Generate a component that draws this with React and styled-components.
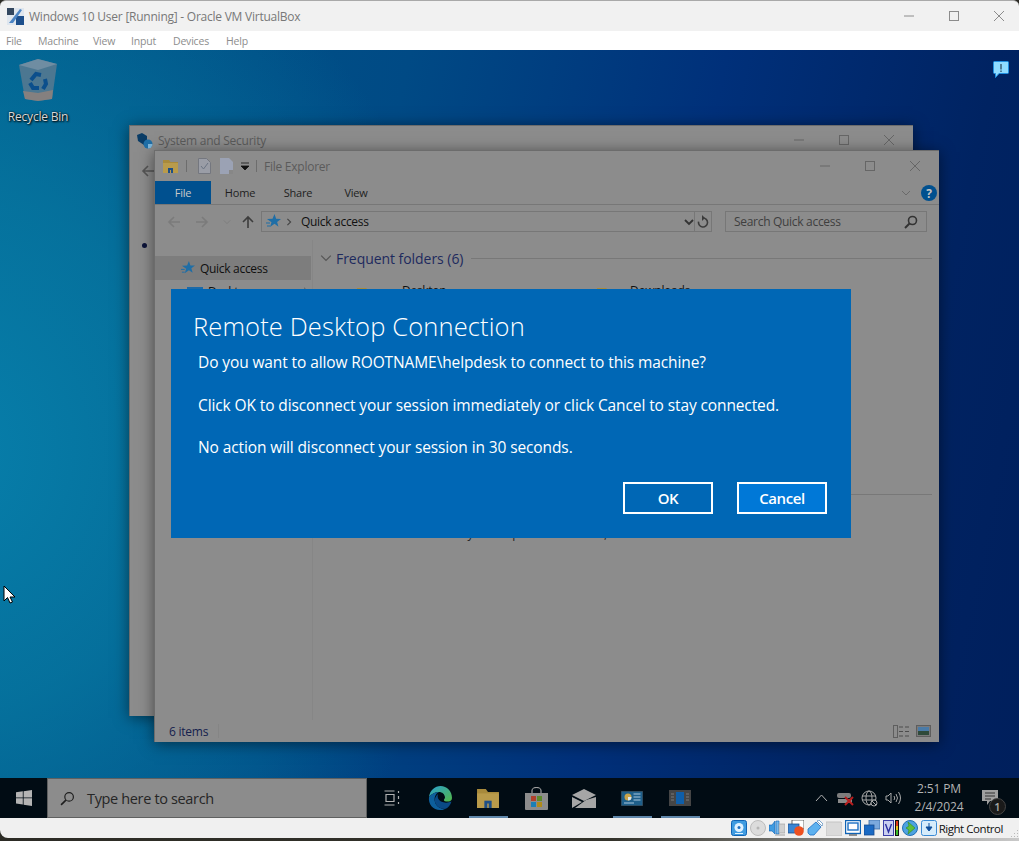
import React from "react";
import styled, { createGlobalStyle } from "styled-components";

const FONT = `"Open Sans", "Noto Sans", "Liberation Sans", sans-serif`;

const GlobalStyle = createGlobalStyle`
  html, body {
    margin: 0;
    padding: 0;
    overflow: hidden;
    background: #2c2b25;
  }
  * { box-sizing: border-box; }
`;

const Host = styled.div`
  width: 1019px;
  height: 841px;
  overflow: hidden;
  display: flex;
  flex-direction: column;
  font-family: ${FONT};
  background: #2c2b25;
`;

const TitleBar = styled.div`
  height: 31px;
  display: flex;
  align-items: center;
  background: #f1f1f1;
  border-top: 1px solid #a9a9a9;
  border-radius: 6px 6px 0 0;
  padding-left: 7px;
  flex: none;
`;

const TitleText = styled.div`
  margin-left: 5px;
  font-size: 12px;
  letter-spacing: -0.24px;
  color: #787878;
  flex: 1;
`;

const TitleControls = styled.div`
  display: flex;
  margin-right: -2px;
`;

const TitleControl = styled.div`
  width: 45px;
  height: 30px;
  display: flex;
  align-items: center;
  justify-content: center;
`;

const MenuBar = styled.div`
  height: 19px;
  background: #fff;
  display: flex;
  align-items: center;
  padding-left: 6px;
  flex: none;
`;

const MenuItem = styled.div`
  width: ${(p) => p.$w}px;
  font-size: 10.5px;
  letter-spacing: -0.2px;
  color: #8d8d8d;
`;

const Desktop = styled.div`
  position: relative;
  height: 728px;
  flex: none;
  overflow: hidden;
  background:
    radial-gradient(ellipse 540px 580px at -60px 400px, #077fab 0%, rgba(7, 122, 163, 0.75) 45%, rgba(0, 100, 150, 0) 100%),
    linear-gradient(102deg, #005a8a 0%, #004a85 35%, #00307a 62%, #002362 85%, #001f5c 100%);
`;

const DesktopIcon = styled.div`
  position: absolute;
  left: 0;
  top: 8px;
  width: 76px;
  display: flex;
  flex-direction: column;
  align-items: center;
`;

const DesktopLabel = styled.div`
  margin-top: 6px;
  font-size: 12px;
  letter-spacing: -0.22px;
  color: #d8d8d8;
  text-shadow: 0 0 2px #000, 1px 1px 2px #000;
`;

const Bubble = styled.div`
  position: absolute;
  left: 993px;
  top: 11px;
  line-height: 0;
`;

const Cursor = styled.div`
  position: absolute;
  left: 3px;
  top: 535px;
  line-height: 0;
`;

const Win = styled.div`
  position: absolute;
  left: ${(p) => p.$left}px;
  top: ${(p) => p.$top}px;
  width: ${(p) => p.$w}px;
  height: ${(p) => p.$h}px;
  background: #8c8c8c;
  border-top: 1px solid #6c6c6c;
  border-left: 1px solid #6c6c6c;
  box-shadow: 0 2px 14px rgba(0, 0, 0, 0.5);
  display: flex;
  flex-direction: column;
`;

const WinTitle = styled.div`
  height: ${(p) => p.$h}px;
  display: flex;
  align-items: center;
  flex: none;
  padding-left: ${(p) => p.$pad}px;
`;

const WinTitleText = styled.div`
  flex: 1;
  margin-left: ${(p) => p.$ml}px;
  font-size: 12px;
  letter-spacing: -0.25px;
  color: #5b5b5b;
`;

const Caption = styled.div`
  width: 45px;
  height: 28px;
  display: flex;
  align-items: center;
  justify-content: center;
`;

const Captions = styled.div`
  display: flex;
  padding-right: 2px;
`;

const Spaced = styled.div`
  margin-left: ${(p) => p.$ml || 0}px;
  line-height: 0;
  flex: none;
`;

const QuickSep = styled.div`
  width: 1px;
  height: 12px;
  margin-left: ${(p) => p.$ml}px;
  background: #6d6d6d;
`;

const BackBody = styled.div`
  flex: 1;
  display: flex;
  flex-direction: column;
  padding: 10px 0 0 11px;
  gap: 65px;
`;

const Bullet = styled.div`
  width: 5px;
  height: 5px;
  border-radius: 50%;
  background: #0c1338;
  margin-left: 1px;
`;

const Ribbon = styled.div`
  height: 24px;
  display: flex;
  align-items: stretch;
  border-bottom: 1px solid #777;
  flex: none;
`;

const RibbonTab = styled.div`
  width: ${(p) => p.$w}px;
  display: flex;
  align-items: center;
  justify-content: center;
  font-size: 11px;
  letter-spacing: -0.2px;
  background: ${(p) => (p.$active ? "#00508f" : "transparent")};
  color: ${(p) => (p.$active ? "#c9c9c9" : "#1e1e1e")};
`;

const RibbonEnd = styled.div`
  margin-left: auto;
  display: flex;
  align-items: center;
  gap: 10px;
  padding-right: 2px;
`;

const AddressRow = styled.div`
  height: 35px;
  flex: none;
  display: flex;
  align-items: flex-start;
  padding: 6px 12px 0 0;
`;

const NavArrows = styled.div`
  width: 106px;
  height: 21px;
  display: flex;
  align-items: center;
  padding-left: 12px;
  gap: 14px;
`;

const AddressBox = styled.div`
  width: 451px;
  height: 21px;
  display: flex;
  align-items: center;
  border: 1px solid #777;
  padding-left: 4px;
`;

const AddressText = styled.div`
  margin-left: 8px;
  font-size: 12px;
  letter-spacing: -0.3px;
  color: #111;
  flex: 1;
`;

const AddressDivider = styled.div`
  width: 17px;
  height: 100%;
  border-left: 1px solid #777;
  display: flex;
  align-items: center;
  justify-content: center;
`;

const SearchBox = styled.div`
  width: 202px;
  height: 21px;
  margin-left: 13px;
  display: flex;
  align-items: center;
  justify-content: space-between;
  padding: 0 8px;
  border: 1px solid #777;
  font-size: 12px;
  letter-spacing: -0.3px;
  color: #3f3f3f;
`;

const Content = styled.div`
  flex: 1;
  min-height: 0;
  display: flex;
`;

const NavPane = styled.div`
  width: 158px;
  flex: none;
  border-right: 1px solid #868686;
  padding-top: 16px;
`;

const NavRow = styled.div`
  height: ${(p) => p.$h}px;
  width: 156px;
  display: flex;
  align-items: center;
  padding-left: ${(p) => p.$pad}px;
  gap: 5px;
  font-size: 12px;
  letter-spacing: -0.3px;
  color: #101010;
  background: ${(p) => (p.$active ? "#7d7d7d" : "transparent")};
`;

const NavExpand = styled.div`
  margin-left: auto;
  margin-right: 2px;
  line-height: 0;
`;

const Main = styled.div`
  flex: 1;
  padding: 8px 7px 0 7px;
  display: flex;
  flex-direction: column;
`;

const SectionHead = styled.div`
  height: 20px;
  display: flex;
  align-items: center;
  gap: 4px;
  font-size: 14px;
  letter-spacing: -0.05px;
  color: #1e2a5e;
  white-space: nowrap;
`;

const SectionLine = styled.div`
  flex: 1;
  height: 1px;
  margin-left: 4px;
  background: #787878;
`;

const FolderGrid = styled.div`
  height: 215px;
  display: grid;
  grid-template-columns: 240px 240px;
  grid-auto-rows: 66px;
  padding: 20px 0 0 36px;
`;

const FolderTile = styled.div`
  display: flex;
  gap: ${(p) => p.$gap}px;
  font-size: 12px;
  letter-spacing: -0.3px;
  color: #111;
`;

const FolderName = styled.div`
  margin-top: -6px;
`;

const SectionRule = styled.div`
  height: 1px;
  margin-top: 11px;
  background: #787878;
`;

const EmptyNote = styled.div`
  margin-top: 30px;
  text-align: center;
  font-size: 12px;
  letter-spacing: -0.2px;
  color: #222;
`;

const StatusRow = styled.div`
  height: 22px;
  flex: none;
  display: flex;
  align-items: center;
  padding: 0 8px 0 14px;
  font-size: 12px;
  letter-spacing: -0.25px;
  color: #14204d;
`;

const StatusSep = styled.div`
  width: 1px;
  height: 14px;
  margin-left: 10px;
  background: #858585;
`;

const StatusIcons = styled.div`
  margin-left: auto;
  display: flex;
  align-items: center;
  gap: 6px;
`;

const Dialog = styled.div`
  position: absolute;
  left: 171px;
  top: 239px;
  width: 680px;
  height: 249px;
  background: #0067b5;
  color: #fff;
  padding: 21px 24px 24px 22px;
  display: flex;
  flex-direction: column;
`;

const DialogTitle = styled.div`
  font-size: 25.5px;
  font-weight: 300;
  line-height: 33px;
  letter-spacing: 0.13px;
`;

const DialogBody = styled.div`
  margin-top: 8px;
  padding-left: 5px;
  display: flex;
  flex-direction: column;
  gap: 20.5px;
  font-size: 15.5px;
  line-height: 22px;
  letter-spacing: -0.11px;
`;

const DialogButtons = styled.div`
  margin-top: auto;
  display: flex;
  justify-content: flex-end;
  gap: 24px;
`;

const DialogButton = styled.div`
  width: 90px;
  height: 32px;
  border: 2px solid #fff;
  display: flex;
  align-items: center;
  justify-content: center;
  font-size: 15px;
  font-weight: 600;
  letter-spacing: -0.4px;
  background: ${(p) => (p.$focus ? "#0078d7" : "transparent")};
`;

const Taskbar = styled.div`
  height: 40px;
  flex: none;
  display: flex;
  align-items: stretch;
  background: #010c14;
`;

const StartButton = styled.div`
  width: 47px;
  display: flex;
  align-items: center;
  justify-content: center;
`;

const TaskSearch = styled.div`
  width: 320px;
  display: flex;
  align-items: center;
  gap: 12px;
  padding-left: 12px;
  background: #8c8c8c;
  border: 1px solid #5f6060;
  font-size: 14.5px;
  letter-spacing: -0.35px;
  color: #262626;
`;

const TaskApps = styled.div`
  display: flex;
  margin-left: 1px;
`;

const TaskApp = styled.div`
  position: relative;
  width: 48px;
  display: flex;
  align-items: center;
  justify-content: center;
  &::after {
    content: "";
    display: ${(p) => (p.$open ? "block" : "none")};
    position: absolute;
    left: 5px;
    right: 4px;
    bottom: 0;
    height: 2px;
    background: #5f87ab;
  }
`;

const Tray = styled.div`
  margin-left: auto;
  display: flex;
  align-items: center;
`;

const TrayIcon = styled.div`
  width: 24px;
  display: flex;
  align-items: center;
  justify-content: center;
`;

const Clock = styled.div`
  width: 68px;
  text-align: center;
  font-size: 12px;
  line-height: 18px;
  letter-spacing: -0.15px;
  white-space: nowrap;
  color: #b4b4b4;
`;

const NotifyWrap = styled.div`
  position: relative;
  width: 46px;
  height: 100%;
  display: flex;
  align-items: center;
  padding-left: 9px;
`;

const NotifyBadge = styled.div`
  position: absolute;
  left: 16px;
  top: 20px;
  width: 17px;
  height: 17px;
  border-radius: 50%;
  border: 1px solid #444;
  background: #1a1a1a;
  color: #a8a8a8;
  font-size: 11px;
  font-weight: 600;
  line-height: 15px;
  text-align: center;
`;

const VBoxStatus = styled.div`
  height: 20px;
  flex: none;
  display: flex;
  align-items: center;
  justify-content: flex-end;
  gap: 3px;
  background: #f0f0f0;
  border-radius: 0 0 0 8px;
`;

const HostKey = styled.div`
  margin-left: -1px;
  font-size: 11.5px;
  letter-spacing: -0.45px;
  color: #111;
`;

const GripBox = styled.div`
  width: 13px;
  height: 100%;
  display: flex;
  align-items: flex-end;
  justify-content: flex-end;
`;

const BottomStrip = styled.div`
  height: 3px;
  flex: none;
  background: linear-gradient(90deg, #2c2b25, #34332b 60%, #c9c9c9 100%);
`;

const Minimize = ({ c = "#666" }) => (
  <svg width="12" height="12" viewBox="0 0 12 12"><path d="M1 6h10" stroke={c} /></svg>
);
const Maximize = ({ c = "#666" }) => (
  <svg width="12" height="12" viewBox="0 0 12 12"><rect x="1.5" y="1.5" width="9" height="9" fill="none" stroke={c} /></svg>
);
const CloseX = ({ c = "#666" }) => (
  <svg width="12" height="12" viewBox="0 0 12 12"><path d="M1 1l10 10M11 1L1 11" stroke={c} /></svg>
);

const VBoxLogo = () => (
  <svg width="17" height="17" viewBox="0 0 17 17">
    <rect width="17" height="17" fill="#dfe6ee" />
    <path d="M0 0h7v7H0z" fill="#33475f" />
    <path d="M9 8h8v9H9z" fill="#1d4f8c" />
    <path d="M2 15L13 1l2 1L6 15z" fill="#4b84c4" />
  </svg>
);

const RecycleBin = () => (
  <svg width="40" height="44" viewBox="0 0 40 44">
    <path d="M1 7L20 1l19 5-5 35-14 2-13-2z" fill="#4c7791" />
    <path d="M1 7l19 5 19-6-19-5z" fill="#6f8da2" />
    <path d="M5 33l15 2 15-3-1 9-14 2-13-2z" fill="#85807f" />
    <g fill="none" stroke="#0b4f8c" strokeWidth="4">
      <path d="M13 22l5-6 5 1" />
      <path d="M27 21l1 5-3 5" />
      <path d="M21 30h-6l-3-5" />
    </g>
  </svg>
);

const AlertBubble = () => (
  <svg width="16" height="18" viewBox="0 0 16 18">
    <path d="M1.5.5h13a1 1 0 011 1v10a1 1 0 01-1 1H6l-3.5 4v-4h-1a1 1 0 01-1-1v-10a1 1 0 011-1z" fill="#8fdcff" stroke="#1f8fe0" />
    <path d="M8 3v5.5M8 9.500v1.500" stroke="#102030" />
  </svg>
);

const Arrow = () => (
  <svg width="14" height="20" viewBox="0 0 14 20">
    <path d="M1 1v15l3.500-3.500L7 18l2.500-1-2.500-5h5z" fill="#fff" stroke="#000" />
  </svg>
);

const SecurityIcon = () => (
  <svg width="17" height="17" viewBox="0 0 17 17">
    <path d="M1 3l5-2 5 3v6l-3 3-6-4z" fill="#0a3c66" />
    <circle cx="12" cy="12" r="4.500" fill="#1f6fa8" />
    <path d="M12 12h4.500a4.500 4.500 0 01-4.500 4.500z" fill="#7fb8dc" />
  </svg>
);

const FolderIcon = ({ w = 15, h = 13 }) => (
  <svg width={w} height={h} viewBox="0 0 15 13">
    <path d="M0 0h6l1.500 2H15v11H0z" fill="#a88a3b" />
    <path d="M0 3h15v10H0z" fill="#b99b4b" />
    <path d="M5 8h5v5H5z" fill="#1f4f86" />
    <path d="M7 10h1v3H7z" fill="#b99b4b" />
  </svg>
);

const CheckDoc = () => (
  <svg width="13" height="16" viewBox="0 0 13 16">
    <path d="M.5.5h8l4 4v11H.5z" fill="#9a9da6" stroke="#74777f" />
    <path d="M3 8l2.500 3L10 5" fill="none" stroke="#6b7483" />
  </svg>
);

const BlankDoc = () => (
  <svg width="13" height="16" viewBox="0 0 13 16">
    <path d="M0 0h9l4 4v12H0z" fill="#9ba2b4" />
    <path d="M9 12h4v4H9z" fill="#878787" />
  </svg>
);

const QuickDrop = () => (
  <svg width="8" height="9" viewBox="0 0 8 9">
    <path d="M0 1h8M0 4h8L4 8z" fill="#111" stroke="#111" strokeWidth="0.8" />
  </svg>
);

const Chevron = ({ dir = "down", c = "#6a6a6a", size = 10, w = 1 }) => (
  <svg width={size} height={size} viewBox="0 0 10 10">
    <path d={dir === "down" ? "M1 3l4 4 4-4" : "M3 1l4 4-4 4"} fill="none" stroke={c} strokeWidth={w} />
  </svg>
);

const Help = () => (
  <svg width="16" height="16" viewBox="0 0 16 16">
    <circle cx="8" cy="8" r="8" fill="#00508f" />
    <text x="8" y="12.500" textAnchor="middle" fontSize="12" fontWeight="700" fontFamily="Open Sans, sans-serif" fill="#c4c4c4">?</text>
  </svg>
);

const NavArrow = ({ dir, c }) => (
  <svg width="14" height="14" viewBox="0 0 14 14">
    <path
      d={dir === "left" ? "M13 7H2M7 2L2 7l5 5" : dir === "right" ? "M1 7h11M7 2l5 5-5 5" : "M7 13V2M2 7l5-5 5 5"}
      fill="none"
      stroke={c}
      strokeWidth="1.600"
    />
  </svg>
);

const Star = ({ size = 15 }) => (
  <svg width={size} height={size} viewBox="0 0 15 15">
    <path d="M8.500 0l1.600 4.800 4.900.1-3.900 3 1.400 4.800-4-2.900L4 13l1.500-4.800L1 5l5.500-.2z" fill="#1f6ea6" />
    <path d="M0 9h4M1 12h3" stroke="#1f6ea6" />
  </svg>
);

const Refresh = () => (
  <svg width="12" height="13" viewBox="0 0 12 13">
    <path d="M6 3a4.500 4.500 0 11-4.400 3.600" fill="none" stroke="#3c3c3c" strokeWidth="1.600" />
    <path d="M5 0v6l3-3z" fill="#3c3c3c" />
  </svg>
);

const Lens = ({ c = "#333", size = 14, sw = 1.6 }) => (
  <svg width={size} height={size} viewBox="0 0 14 14">
    <circle cx="8.500" cy="5.500" r="4" fill="none" stroke={c} strokeWidth={sw} />
    <path d="M5.500 8.500L1 13" stroke={c} strokeWidth={sw + 0.4} />
  </svg>
);

const ViewDetails = () => (
  <svg width="17" height="13" viewBox="0 0 17 13">
    <rect x=".5" y=".5" width="4" height="12" fill="none" stroke="#5e5e5e" />
    <path d="M6 2h4M12 2h4M6 6.500h4M12 6.500h4M6 11h4M12 11h4" stroke="#4c4c4c" />
  </svg>
);

const ViewTiles = () => (
  <svg width="15" height="12" viewBox="0 0 15 12">
    <rect x=".5" y=".5" width="14" height="11" fill="#7a7a7a" stroke="#5e5e5e" />
    <rect x="2" y="2" width="11" height="4" fill="#4a7ba8" />
    <rect x="2" y="6" width="11" height="4" fill="#2f4a3a" />
  </svg>
);

const WinLogo = () => (
  <svg width="16" height="16" viewBox="0 0 16 16">
    <path d="M0 2.300L6.800 1.300v6.200H0zM7.600 1.200L16 0v7.500H7.600zM0 8.300h6.800v6.300L0 13.600zM7.600 8.300H16V16l-8.400-1.200z" fill="#b4b4b4" />
  </svg>
);

const TaskView = () => (
  <svg width="17" height="16" viewBox="0 0 17 16">
    <path d="M.5 1h10M.5 15h10M2 4.500h8v7H2zM14.500 1v2M14.500 6v3M14.500 12v2" fill="none" stroke="#b0b0b0" strokeWidth="1.200" />
  </svg>
);

const EdgeIcon = () => (
  <svg width="24" height="24" viewBox="0 0 24 24">
    <defs>
      <linearGradient id="edgeA" x1="0" y1="0" x2="1" y2="1">
        <stop offset="0" stopColor="#2a9fd0" />
        <stop offset="1" stopColor="#53b948" />
      </linearGradient>
    </defs>
    <path d="M1 11C2 4 7 0 12.500 0 19 0 24 5 24 12c0 3-3 4-6 3.500-3-.5-2-2.500-1-3.500 0-4-3-6-6-6-4 0-8 2-10 5z" fill="url(#edgeA)" />
    <path d="M1 11c2-3 6-5 10-5-4 2-5 6-4 10 1 4 5 7 10 7-2 1-3 1-5 1C5 24 0 18 1 11z" fill="#0d5f9c" />
    <path d="M17 23c-5 0-9-3-10-7-.8-3 .5-6 3-8-1 3 0 6 3 7.500 3 1.500 7 1.500 10.500 0C22.500 19 20 22 17 23z" fill="#0a4a86" />
  </svg>
);

const StoreIcon = () => (
  <svg width="23" height="23" viewBox="0 0 23 23">
    <path d="M7 6V3.500a4.500 3 0 019 0V6" fill="none" stroke="#a0a0a0" strokeWidth="1.200" />
    <path d="M0 6h23v16a1 1 0 01-1 1H1a1 1 0 01-1-1z" fill="#8c8c8c" />
    <rect x="6" y="9" width="5" height="5" fill="#b0402c" />
    <rect x="12" y="9" width="5" height="5" fill="#5c8a2a" />
    <rect x="6" y="15" width="5" height="5" fill="#1b7fb5" />
    <rect x="12" y="15" width="5" height="5" fill="#b08a1a" />
  </svg>
);

const MailIcon = () => (
  <svg width="24" height="19" viewBox="0 0 24 19">
    <path d="M0 6L12 0l12 6-12 6z" fill="#a6a6a6" />
    <path d="M0 8l10 5L0 19zM24 8v11H3l11-8z" fill="#a6a6a6" />
  </svg>
);

const ControlPanel = () => (
  <svg width="22" height="15" viewBox="0 0 22 15">
    <rect width="22" height="15" fill="#1e5f8a" stroke="#3a3a3a" />
    <circle cx="7" cy="6" r="3.500" fill="#c9a34a" />
    <path d="M7 6h3.500A3.500 3.500 0 017 9.500z" fill="#d9e6ef" />
    <path d="M12.500 3h7M12.500 6h7M12.500 9h7M3 12h10" stroke="#a9c7dc" />
  </svg>
);

const AppWindow = () => (
  <svg width="22" height="16" viewBox="0 0 22 16">
    <rect width="22" height="16" fill="#454545" />
    <rect x="7" y="2" width="8" height="12" fill="#0f5ea8" />
    <path d="M2 4h3M2 7h3M2 10h3M17 4h3M17 7h3M17 10h3" stroke="#7a7a7a" />
  </svg>
);

const NetworkCard = () => (
  <svg width="17" height="17" viewBox="0 0 17 17">
    <rect x="0" y="3" width="14" height="5" rx="2" fill="#7d7d7d" />
    <rect x="1" y="9" width="14" height="4" fill="#8a8a8a" />
    <path d="M8 7l8 8M16 7l-8 8" stroke="#b81d1d" strokeWidth="2" />
  </svg>
);

const Globe = () => (
  <svg width="17" height="17" viewBox="0 0 17 17" fill="none" stroke="#a8a8a8">
    <circle cx="8" cy="8" r="7" />
    <ellipse cx="8" cy="8" rx="3" ry="7" />
    <path d="M1 6h14M1 10h14" />
    <circle cx="13" cy="13" r="3" fill="#010c14" />
    <path d="M11 11l4 4" />
  </svg>
);

const Speaker = () => (
  <svg width="17" height="14" viewBox="0 0 17 14" fill="none" stroke="#a8a8a8">
    <path d="M1 5h2l3-3v10L3 9H1z" />
    <path d="M9 5q1.500 2 0 4M11 3q3 4 0 8M13.500 1q4 6 0 12" />
  </svg>
);

const NotifyIcon = () => (
  <svg width="18" height="17" viewBox="0 0 18 17">
    <path d="M0 0h16v11H8l-3 4v-4H0z" fill="#a0a0a0" />
    <path d="M3 3h10M3 6h10M3 9h6" stroke="#333" />
  </svg>
);

const StHd = () => (
  <svg width="16" height="16" viewBox="0 0 16 16">
    <rect x=".5" y=".5" width="15" height="15" rx="2" fill="#3f9be0" stroke="#0f63b5" />
    <circle cx="8" cy="7.500" r="4.500" fill="#dff1ff" />
    <circle cx="8" cy="7.500" r="1.500" fill="#1f6fc0" />
    <path d="M4 13.500h8" stroke="#dff1ff" />
  </svg>
);

const StCd = () => (
  <svg width="16" height="16" viewBox="0 0 16 16">
    <circle cx="8" cy="8" r="7.500" fill="#dcdcdc" stroke="#bcbcbc" />
    <circle cx="8" cy="8" r="1.500" fill="#b5b5b5" />
  </svg>
);

const StAudio = () => (
  <svg width="16" height="16" viewBox="0 0 16 16">
    <path d="M0 5h3l3-4v13L3 11H0z" fill="#3f9be0" stroke="#0f63b5" strokeWidth=".6" />
    <path d="M7 1h3v13H7z" fill="#74b8ec" stroke="#0f63b5" strokeWidth=".6" />
    <rect x="10" y="4" width="6" height="9" fill="#d0d0d0" stroke="#9c9c9c" strokeWidth=".6" />
    <path d="M6 15h10" stroke="#a0a0a0" />
  </svg>
);

const StNet = () => (
  <svg width="16" height="16" viewBox="0 0 16 16">
    <rect x="4" y="0" width="12" height="9" fill="#fff" stroke="#444" strokeWidth=".8" />
    <rect x="0" y="4" width="11" height="9" fill="#3a85d4" stroke="#1d4f8c" strokeWidth=".8" />
    <circle cx="11" cy="11" r="4.800" fill="#ee5020" />
  </svg>
);

const StUsb = () => (
  <svg width="16" height="16" viewBox="0 0 16 16">
    <path d="M9 2l5 5-7 8H3l-2-2v-4z" fill="#5db1ef" stroke="#1d70c4" strokeWidth=".8" />
    <path d="M10 1l2-1 4 4-1 2z" fill="#fff" stroke="#5a8fc0" strokeWidth=".8" />
  </svg>
);

const StShared = () => (
  <svg width="16" height="15" viewBox="0 0 16 15">
    <path d="M0 1h15l1 1v13H0z" fill="#dadada" stroke="#c4c4c4" />
  </svg>
);

const StDisplay = () => (
  <svg width="16" height="16" viewBox="0 0 16 16">
    <rect x=".5" y=".5" width="15" height="13" fill="#fff" stroke="#0f63b5" strokeWidth="1.400" />
    <rect x="3" y="3" width="10" height="7" fill="#fff" stroke="#1d70c4" strokeWidth="1.400" />
    <path d="M4 15h8" stroke="#666" strokeWidth="1.400" />
  </svg>
);

const StSeamless = () => (
  <svg width="16" height="16" viewBox="0 0 16 16">
    <rect x="5" y="0" width="11" height="9" fill="#7ba9dd" stroke="#3a6ca8" strokeWidth=".8" />
    <rect x="0" y="5" width="10" height="10" fill="#1a6ac4" stroke="#174a8c" strokeWidth=".8" />
  </svg>
);

const StVt = () => (
  <svg width="16" height="16" viewBox="0 0 16 16">
    <rect x=".5" y=".5" width="10" height="15" fill="#c9cff0" stroke="#3b3fa8" />
    <path d="M2.500 4l3 8 3-8" fill="none" stroke="#2a2ea0" strokeWidth="1.400" />
    <rect x="12" y="0" width="4" height="16" fill="#111" />
    <rect x="13" y="1" width="2" height="5" fill="#e03a1a" />
    <rect x="13" y="6" width="2" height="4" fill="#e8c41a" />
    <rect x="13" y="10" width="2" height="5" fill="#3cbb2a" />
  </svg>
);

const StGuest = () => (
  <svg width="16" height="16" viewBox="0 0 16 16">
    <circle cx="8" cy="8" r="7.500" fill="#4da2e0" stroke="#1f6fb5" />
    <path d="M6 2l7 6-7 6 1-4-3-2 3-2z" fill="#5fbf3a" stroke="#2f8a1a" strokeWidth=".6" />
  </svg>
);

const StCapture = () => (
  <svg width="16" height="16" viewBox="0 0 16 16">
    <rect x=".5" y=".5" width="15" height="15" rx="2" fill="#d6ecfb" stroke="#3a8ad4" />
    <path d="M8 3v6M5 7h6l-3 4z" fill="#0f4f9c" stroke="#0f4f9c" />
  </svg>
);

const GripDots = () => (
  <svg width="9" height="9" viewBox="0 0 9 9">
    <path d="M7 1h1v1H7zM4 4h1v1H4zM7 4h1v1H7zM1 7h1v1H1zM4 7h1v1H4zM7 7h1v1H7z" fill="#b9b9b9" />
  </svg>
);

const App = () => (
  <Host>
    <GlobalStyle />
    <TitleBar>
      <VBoxLogo />
      <TitleText>Windows 10 User [Running] - Oracle VM VirtualBox</TitleText>
      <TitleControls>
        <TitleControl><Minimize c="#8c8c8c" /></TitleControl>
        <TitleControl><Maximize c="#8c8c8c" /></TitleControl>
        <TitleControl><CloseX c="#8c8c8c" /></TitleControl>
      </TitleControls>
    </TitleBar>
    <MenuBar>
      <MenuItem $w={32}>File</MenuItem>
      <MenuItem $w={55}>Machine</MenuItem>
      <MenuItem $w={38}>View</MenuItem>
      <MenuItem $w={42}>Input</MenuItem>
      <MenuItem $w={53}>Devices</MenuItem>
      <MenuItem $w={30}>Help</MenuItem>
    </MenuBar>

    <Desktop>
      <DesktopIcon>
        <RecycleBin />
        <DesktopLabel>Recycle Bin</DesktopLabel>
      </DesktopIcon>
      <Bubble><AlertBubble /></Bubble>
      <Cursor><Arrow /></Cursor>

      <Win $left={129} $top={75} $w={784} $h={591}>
        <WinTitle $h={28} $pad={6}>
          <SecurityIcon />
          <WinTitleText $ml={5}>System and Security</WinTitleText>
          <Captions>
            <Caption><Minimize /></Caption>
            <Caption><Maximize /></Caption>
            <Caption><CloseX /></Caption>
          </Captions>
        </WinTitle>
        <BackBody>
          <NavArrow dir="left" c="#555" />
          <Bullet />
        </BackBody>
      </Win>

      <Win $left={154} $top={100} $w={785} $h={592}>
        <WinTitle $h={30} $pad={8}>
          <FolderIcon />
          <QuickSep $ml={8} />
          <Spaced $ml={11}><CheckDoc /></Spaced>
          <Spaced $ml={9}><BlankDoc /></Spaced>
          <Spaced $ml={8}><QuickDrop /></Spaced>
          <QuickSep $ml={7} />
          <WinTitleText $ml={7}>File Explorer</WinTitleText>
          <Captions>
            <Caption><Minimize /></Caption>
            <Caption><Maximize /></Caption>
            <Caption><CloseX /></Caption>
          </Captions>
        </WinTitle>
        <Ribbon>
          <RibbonTab $w={56} $active>File</RibbonTab>
          <RibbonTab $w={58}>Home</RibbonTab>
          <RibbonTab $w={58}>Share</RibbonTab>
          <RibbonTab $w={58}>View</RibbonTab>
          <RibbonEnd>
            <Chevron />
            <Help />
          </RibbonEnd>
        </Ribbon>
        <AddressRow>
          <NavArrows>
            <NavArrow dir="left" c="#7b7b7b" />
            <NavArrow dir="right" c="#7b7b7b" />
            <Chevron c="#7b7b7b" size={8} />
            <Spaced $ml={-4}><NavArrow dir="up" c="#3d3d3d" /></Spaced>
          </NavArrows>
          <AddressBox>
            <Star />
            <Spaced $ml={4}><Chevron dir="right" c="#444" size={8} w={1.4} /></Spaced>
            <AddressText>Quick access</AddressText>
            <Chevron c="#333" size={10} w={1.8} />
            <AddressDivider><Refresh /></AddressDivider>
          </AddressBox>
          <SearchBox>
            Search Quick access
            <Lens />
          </SearchBox>
        </AddressRow>
        <Content>
          <NavPane>
            <NavRow $h={24} $pad={26} $active>
              <Star size={14} />
              Quick access
            </NavRow>
            <NavRow $h={22} $pad={32}>
              <svg width="16" height="13" viewBox="0 0 16 13"><rect width="16" height="13" y="2" fill="#1c6aa8" /></svg>
              Desktop
              <NavExpand>
                <svg width="6" height="8" viewBox="0 0 6 8"><path d="M1 0l4 4-4 4z" fill="#6c6c6c" /></svg>
              </NavExpand>
            </NavRow>
          </NavPane>
          <Main>
            <SectionHead>
              <Chevron c="#555" size={12} />
              Frequent folders (6)
              <SectionLine />
            </SectionHead>
            <FolderGrid>
              <FolderTile $gap={21}>
                <FolderIcon w={25} h={20} />
                <FolderName>Desktop</FolderName>
              </FolderTile>
              <FolderTile $gap={9}>
                <FolderIcon w={25} h={20} />
                <FolderName>Downloads</FolderName>
              </FolderTile>
            </FolderGrid>
            <SectionRule />
            <EmptyNote>After you've opened some files, we'll show the most recent ones here.</EmptyNote>
          </Main>
        </Content>
        <StatusRow>
          6 items
          <StatusSep />
          <StatusIcons>
            <ViewDetails />
            <ViewTiles />
          </StatusIcons>
        </StatusRow>
      </Win>

      <Dialog>
        <DialogTitle>Remote Desktop Connection</DialogTitle>
        <DialogBody>
          <div>Do you want to allow ROOTNAME\helpdesk to connect to this machine?</div>
          <div>Click OK to disconnect your session immediately or click Cancel to stay connected.</div>
          <div>No action will disconnect your session in 30 seconds.</div>
        </DialogBody>
        <DialogButtons>
          <DialogButton>OK</DialogButton>
          <DialogButton $focus>Cancel</DialogButton>
        </DialogButtons>
      </Dialog>
    </Desktop>

    <Taskbar>
      <StartButton><WinLogo /></StartButton>
      <TaskSearch>
        <Lens c="#1e1e1e" size={15} sw={1.1} />
        Type here to search
      </TaskSearch>
      <TaskApps>
        <TaskApp><TaskView /></TaskApp>
        <TaskApp><EdgeIcon /></TaskApp>
        <TaskApp $open><FolderIcon w={22} h={19} /></TaskApp>
        <TaskApp><StoreIcon /></TaskApp>
        <TaskApp><MailIcon /></TaskApp>
        <TaskApp $open><ControlPanel /></TaskApp>
        <TaskApp $open><AppWindow /></TaskApp>
      </TaskApps>
      <Tray>
        <TrayIcon><svg width="13" height="8" viewBox="0 0 13 8"><path d="M1 7l5.500-6L12 7" fill="none" stroke="#b0b0b0" /></svg></TrayIcon>
        <TrayIcon><NetworkCard /></TrayIcon>
        <TrayIcon><Globe /></TrayIcon>
        <TrayIcon><Speaker /></TrayIcon>
        <Clock>2:51 PM<br />2/4/2024</Clock>
        <NotifyWrap>
          <NotifyIcon />
          <NotifyBadge>1</NotifyBadge>
        </NotifyWrap>
      </Tray>
    </Taskbar>

    <VBoxStatus>
      <StHd />
      <StCd />
      <StAudio />
      <StNet />
      <StUsb />
      <StShared />
      <StDisplay />
      <StSeamless />
      <StVt />
      <StGuest />
      <StCapture />
      <HostKey>Right Control</HostKey>
      <GripBox><GripDots /></GripBox>
    </VBoxStatus>
    <BottomStrip />
  </Host>
);

export default App;
